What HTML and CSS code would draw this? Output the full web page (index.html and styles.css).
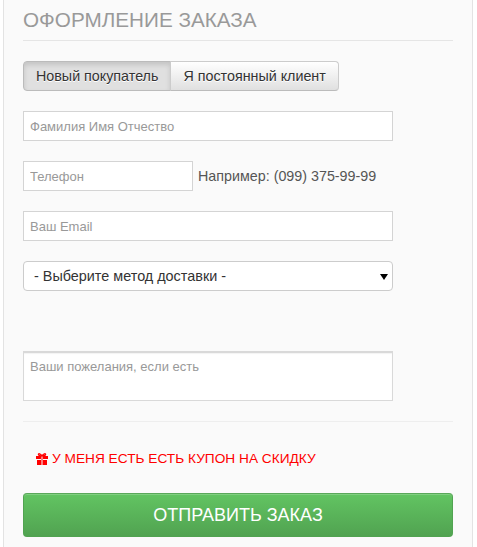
FILE: index.html
```html
<!DOCTYPE html>
<html lang="ru">
<head>
<meta charset="utf-8">
<title>Оформление заказа</title>
<link rel="stylesheet" href="styles.css">
</head>
<body>
<main class="panel">
  <h1 class="title">ОФОРМЛЕНИЕ ЗАКАЗА</h1>
  <div class="tabs">
    <button class="tab tab-active" type="button">Новый покупатель</button>
    <button class="tab" type="button">Я постоянный клиент</button>
  </div>
  <form class="form">
    <input class="field field-wide" type="text" placeholder="Фамилия Имя Отчество">
    <div class="phone-row">
      <input class="field field-phone" type="text" placeholder="Телефон">
      <span class="hint">Например: (099) 375-99-99</span>
    </div>
    <input class="field field-wide" type="text" placeholder="Ваш Email">
    <div class="select-wrap">
      <select class="delivery">
        <option>- Выберите метод доставки -</option>
      </select>
      <span class="caret"></span>
    </div>
    <textarea class="field field-wide notes" placeholder="Ваши пожелания, если есть"></textarea>
  </form>
  <div class="rule"></div>
  <a class="coupon" href="#">
    <svg class="gift" viewBox="0 0 12 12" width="12" height="12" aria-hidden="true">
      <path fill="#f00" d="M0 3h5v3H0zM7 3h5v3H7zM1 7h4v5H1zM7 7h4v5H7z"/>
      <path fill="#f00" d="M5.500 3h1v9h-1z"/>
      <path fill="none" stroke="#f00" stroke-width="1.300" d="M6 2.800C4.500 2.800 2.400 2.700 2.400 1.500 2.400.5 4.300.2 6 2.800 7.700.2 9.600.5 9.600 1.500 9.600 2.700 7.500 2.800 6 2.800z"/>
    </svg>
    <span>У МЕНЯ ЕСТЬ ЕСТЬ КУПОН НА СКИДКУ</span>
  </a>
  <button class="submit" type="button">ОТПРАВИТЬ ЗАКАЗ</button>
</main>
</body>
</html>
```
FILE: styles.css
```css
* { box-sizing: border-box; }
html, body { margin: 0; padding: 0; background: #fff; }
body {
  height: 547px;
  overflow: hidden;
  font-family: "Liberation Sans", Arial, sans-serif;
}
.panel {
  width: 470px;
  height: 547px;
  margin-left: 3px;
  padding: 0 19px;
  background: #fafafa;
  border-left: 1px solid #e3e3e3;
  border-right: 1px solid #e3e3e3;
}
.title {
  margin: 0;
  height: 41px;
  padding-top: 8px;
  font-size: 20.7px;
  line-height: 23px;
  font-weight: 400;
  color: #999;
  border-bottom: 1px solid #e5e5e5;
}
.tabs {
  display: inline-flex;
  margin-top: 20px;
  height: 30px;
  vertical-align: top;
}
.tab {
  height: 30px;
  margin: 0 0 0 -1px;
  padding: 0 12px;
  font: 14.3px/20px "Liberation Sans", Arial, sans-serif;
  color: #333;
  background: linear-gradient(#fff, #e0e0e0);
  border: 1px solid #ccc;
  border-bottom-color: #bbb;
  border-radius: 0 4px 4px 0;
  text-shadow: 0 1px 0 #fff;
}
.tab-active {
  margin-left: 0;
  background: #e0e0e0;
  border-radius: 4px 0 0 4px;
  border-color: #bbb;
  box-shadow: inset 0 3px 5px rgba(0, 0, 0, .125);
}
.form {
  display: flex;
  flex-direction: column;
  align-items: flex-start;
  margin-top: 20px;
}
.field {
  display: block;
  height: 30px;
  padding: 0 6px;
  font: 13px/18px "Liberation Sans", Arial, sans-serif;
  color: #555;
  background: #fff;
  border: 1px solid #d4d4d4;
  border-radius: 0;
  outline: 0;
}
.field::placeholder { color: #999; opacity: 1; }
.field-wide { width: 370px; }
.field-phone { width: 170px; flex: none; }
.phone-row {
  display: flex;
  align-items: center;
  gap: 5px;
  margin-top: 20px;
  margin-bottom: 20px;
}
.hint { font-size: 14.3px; color: #555; }
.select-wrap {
  position: relative;
  width: 370px;
  height: 30px;
  margin-top: 20px;
}
.delivery {
  display: block;
  width: 100%;
  height: 30px;
  padding: 0 6px 0 10px;
  font: 14.4px "Liberation Sans", Arial, sans-serif;
  color: #333;
  background: #fff;
  border: 1px solid #ccc;
  border-radius: 4px;
  appearance: none;
  -webkit-appearance: none;
}
.caret {
  position: absolute;
  top: 13px;
  right: 5px;
  width: 0;
  height: 0;
  border-left: 4px solid transparent;
  border-right: 4px solid transparent;
  border-top: 6px solid #000;
  pointer-events: none;
}
.notes {
  height: 50px;
  margin-top: 60px;
  padding: 5px 6px;
  resize: none;
  border-width: 2px 1px 1px;
  border-color: #d9d9d9;
  box-shadow: inset 0 1px 1px rgba(0, 0, 0, .05);
}
.rule {
  height: 1px;
  margin-top: 20px;
  background: #eee;
}
.coupon {
  display: flex;
  align-items: center;
  gap: 4px;
  margin: 29px 0 0 13px;
  height: 16px;
  font-size: 13.7px;
  line-height: 16px;
  color: #f00;
  text-decoration: none;
}
.gift { flex: none; }
.submit {
  display: block;
  width: 430px;
  height: 44px;
  margin-top: 26px;
  padding: 0;
  font: 18px/24px "Liberation Sans", Arial, sans-serif;
  color: #fff;
  background: linear-gradient(#62c462, #51a351);
  border: 1px solid #51a351;
  border-top-color: #5aa85a;
  border-radius: 4px;
  box-shadow: inset 0 1px 0 rgba(255, 255, 255, .2);
}
```
